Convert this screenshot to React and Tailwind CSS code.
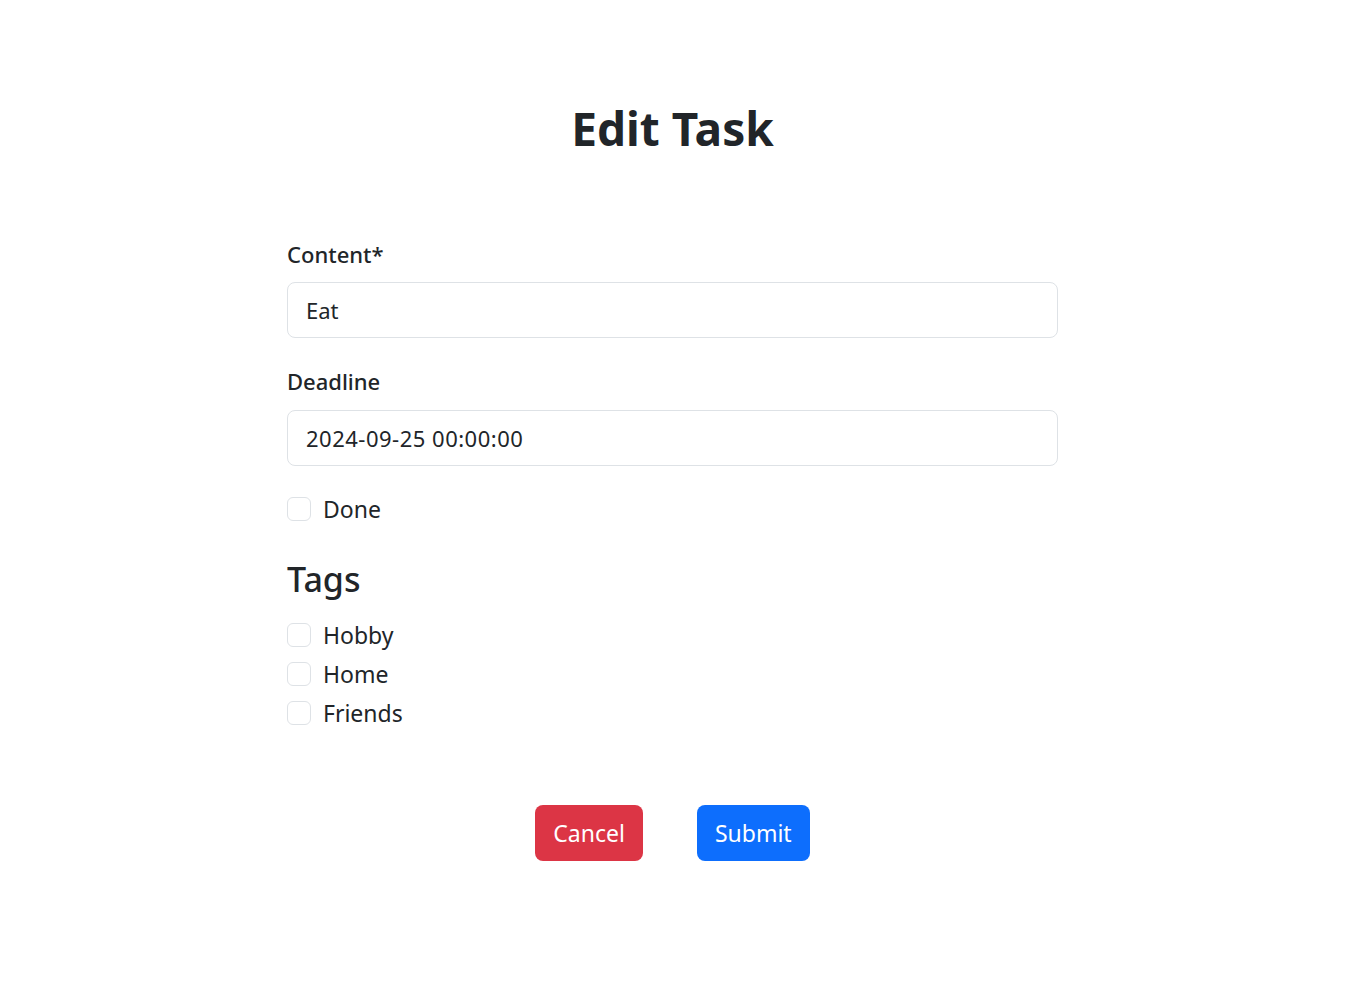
const tags = ["Hobby", "Home", "Friends"];

const Check = ({ label }) => (
    <label className="flex items-center h-[39px] gap-3">
        <span className="w-[24px] h-[24px] -mt-[2px] border border-[#dee2e6] rounded-[6px] bg-white shrink-0" />
        <span className="text-[23px] text-[#212529]">{label}</span>
    </label>
);

export default function App() {
    return (
        <div className="min-h-screen bg-white text-[#212529] font-['Noto_Sans',sans-serif] flex justify-center pr-[7px]">
            <div className="w-[771px] pt-[96px]">
                <h1 className="text-center text-[46px] font-bold leading-[64px]">Edit Task</h1>

                <form className="mt-[78px]">
                    <label className="block text-[22px] font-medium leading-[32px]">Content*</label>
                    <input
                        className="mt-[12px] w-full h-[56px] px-[18px] text-[22px] border border-[#dee2e6] rounded-[8px] outline-none"
                        defaultValue="Eat"
                    />

                    <label className="block mt-[27px] text-[22px] font-medium leading-[32px]">Deadline</label>
                    <input
                        className="mt-[13px] w-full h-[56px] px-[18px] text-[22px] tracking-[0.5px] border border-[#dee2e6] rounded-[8px] outline-none"
                        defaultValue="2024-09-25 00:00:00"
                    />

                    <div className="mt-[24px]">
                        <Check label="Done" />
                    </div>

                    <h2 className="mt-[26px] text-[34px] font-medium leading-[48px]">Tags</h2>
                    <div className="mt-[13px] flex flex-col">
                        {tags.map((t) => (
                            <Check key={t} label={t} />
                        ))}
                    </div>

                    <div className="mt-[72px] flex justify-center gap-[54px]">
                        <button type="button" className="h-[56px] px-[18px] rounded-[8px] bg-[#dc3545] text-white text-[23px]">
                            Cancel
                        </button>
                        <button type="button" className="h-[56px] px-[18px] rounded-[8px] bg-[#0d6efd] text-white text-[23px]">
                            Submit
                        </button>
                    </div>
                </form>
            </div>
        </div>
    );
}
